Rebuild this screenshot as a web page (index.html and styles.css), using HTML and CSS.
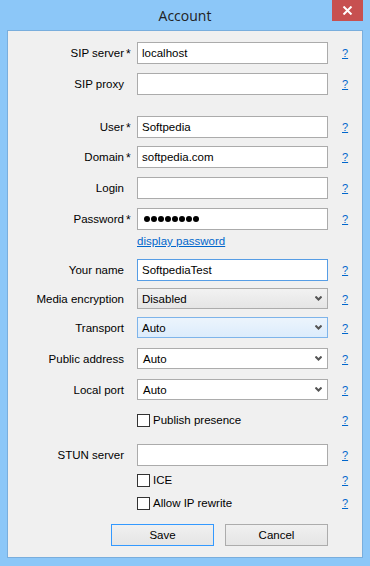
FILE: index.html
```html
<!DOCTYPE html>
<html lang="en">

<head>
    <meta charset="UTF-8">
    <title>Account</title>
    <link rel="stylesheet" href="styles.css">
</head>

<body>
    <div class="window">
        <div class="titlebar">
            <span class="title">Account</span>
            <div class="btn_close">
                <svg width="11" height="9" viewBox="0 0 11 9">
                    <path d="M1.5 0.5 L9.5 8.5 M9.5 0.5 L1.5 8.5" stroke="#fff" stroke-width="2" />
                </svg>
            </div>
        </div>

        <div class="client">
            <div class="form">
                <div class="row r_first">
                    <label class="lbl">SIP server</label><span class="req">*</span>
                    <div class="field">localhost</div>
                    <a class="help" href="#">?</a>
                </div>
                <div class="row r_9">
                    <label class="lbl">SIP proxy</label><span class="req"></span>
                    <div class="field"></div>
                    <a class="help" href="#">?</a>
                </div>
                <div class="row r_21">
                    <label class="lbl">User</label><span class="req">*</span>
                    <div class="field">Softpedia</div>
                    <a class="help" href="#">?</a>
                </div>
                <div class="row r_8">
                    <label class="lbl">Domain</label><span class="req">*</span>
                    <div class="field">softpedia.com</div>
                    <a class="help" href="#">?</a>
                </div>
                <div class="row r_9">
                    <label class="lbl">Login</label><span class="req"></span>
                    <div class="field"></div>
                    <a class="help" href="#">?</a>
                </div>
                <div class="row r_9">
                    <label class="lbl">Password</label><span class="req">*</span>
                    <div class="field dots">
                        <i></i><i></i><i></i><i></i><i></i><i></i><i></i><i></i>
                    </div>
                    <a class="help" href="#">?</a>
                </div>
                <div class="row r_link">
                    <span class="lbl"></span><span class="req"></span>
                    <a class="show_pwd" href="#">display password</a>
                </div>
                <div class="row r_11">
                    <label class="lbl">Your name</label><span class="req"></span>
                    <div class="field focused">SoftpediaTest</div>
                    <a class="help" href="#">?</a>
                </div>
                <div class="row r_7 r_sel">
                    <label class="lbl">Media encryption</label><span class="req"></span>
                    <div class="select grey">
                        <span>Disabled</span>
                        <svg class="arrow" width="7" height="5" viewBox="0 0 7 5"><path d="M0.5 0.5 L3.5 3.5 L6.5 0.5" fill="none" stroke="#555" stroke-width="2" /></svg>
                    </div>
                    <a class="help" href="#">?</a>
                </div>
                <div class="row r_8 r_sel">
                    <label class="lbl">Transport</label><span class="req"></span>
                    <div class="select hot">
                        <span>Auto</span>
                        <svg class="arrow" width="7" height="5" viewBox="0 0 7 5"><path d="M0.5 0.5 L3.5 3.5 L6.5 0.5" fill="none" stroke="#555" stroke-width="2" /></svg>
                    </div>
                    <a class="help" href="#">?</a>
                </div>
                <div class="row r_10 r_sel">
                    <label class="lbl">Public address</label><span class="req"></span>
                    <div class="select white">
                        <span>Auto</span>
                        <svg class="arrow" width="7" height="5" viewBox="0 0 7 5"><path d="M0.5 0.5 L3.5 3.5 L6.5 0.5" fill="none" stroke="#555" stroke-width="2" /></svg>
                    </div>
                    <a class="help" href="#">?</a>
                </div>
                <div class="row r_10 r_sel">
                    <label class="lbl">Local port</label><span class="req"></span>
                    <div class="select white">
                        <span>Auto</span>
                        <svg class="arrow" width="7" height="5" viewBox="0 0 7 5"><path d="M0.5 0.5 L3.5 3.5 L6.5 0.5" fill="none" stroke="#555" stroke-width="2" /></svg>
                    </div>
                    <a class="help" href="#">?</a>
                </div>
                <div class="row r_14 r_chk">
                    <span class="lbl"></span><span class="req"></span>
                    <div class="check"><span class="box"></span>Publish presence</div>
                    <a class="help" href="#">?</a>
                </div>
                <div class="row r_17">
                    <label class="lbl">STUN server</label><span class="req"></span>
                    <div class="field"></div>
                    <a class="help" href="#">?</a>
                </div>
                <div class="row r_8 r_chk">
                    <span class="lbl"></span><span class="req"></span>
                    <div class="check"><span class="box"></span>ICE</div>
                    <a class="help" href="#">?</a>
                </div>
                <div class="row r_10 r_chk">
                    <span class="lbl"></span><span class="req"></span>
                    <div class="check"><span class="box"></span>Allow IP rewrite</div>
                    <a class="help" href="#">?</a>
                </div>

                <div class="buttons">
                    <div class="btn btn_default">Save</div>
                    <div class="btn">Cancel</div>
                </div>
            </div>
        </div>
    </div>
</body>

</html>
```

FILE: styles.css
```css
body {
    margin: 0;
    background: #8cc7f8;
    font-family: "Liberation Sans", Arial, sans-serif;
    font-size: 11.5px;
    color: #000;
}

.window {
    width: 370px;
    height: 566px;
    position: relative;
    background: #8cc7f8;
}

.titlebar {
    height: 30px;
    text-align: center;
}

.title {
    display: inline-block;
    padding-top: 6px;
    font-family: "Open Sans", sans-serif;
    font-size: 14px;
    color: #222;
}

.btn_close {
    position: absolute;
    top: 0;
    right: 7px;
    width: 31px;
    height: 21px;
    background: #c75050;
    display: flex;
    align-items: center;
    justify-content: center;
}

.client {
    margin: 0 7px;
    height: 526px;
    border: 1px solid #79aedd;
    background: #f0f0f0;
}

.form {
    padding-top: 11px;
}

.row {
    display: grid;
    grid-template-columns: 116px 13px 191px 14px 10px;
    align-items: center;
    height: 22px;
}

.r_sel {
    height: 21px;
}

.r_chk {
    height: 13px;
    line-height: 13px;
}

.r_link {
    height: 14px;
    margin-top: 4px;
}

.r_7 { margin-top: 7px; }
.r_8 { margin-top: 8px; }
.r_9 { margin-top: 9px; }
.r_10 { margin-top: 10px; }
.r_11 { margin-top: 11px; }
.r_14 { margin-top: 14px; }
.r_17 { margin-top: 17px; }
.r_21 { margin-top: 21px; }

.lbl {
    text-align: right;
    white-space: nowrap;
}

.req {
    padding-left: 2px;
    align-self: start;
    padding-top: 5px;
    font-size: 12px;
}

.field {
    grid-column: 3;
    height: 20px;
    border: 1px solid #ababab;
    background: #fff;
    padding-left: 4px;
    line-height: 20px;
    width: 185px;
}

.field.focused {
    border-color: #569de5;
}

.dots {
    display: flex;
    align-items: center;
    gap: 1px;
    padding-left: 6px;
    width: 183px;
}

.dots i {
    width: 6px;
    height: 6px;
    border-radius: 50%;
    background: #000;
}

.help {
    grid-column: 5;
    color: #0066cc;
    font-size: 11px;
}

.show_pwd {
    grid-column: 3;
    color: #0066cc;
}

.select {
    grid-column: 3;
    height: 19px;
    border: 1px solid #acacac;
    display: flex;
    align-items: center;
    justify-content: space-between;
    padding: 0 5px 0 4px;
}

.select.grey {
    background: linear-gradient(#f2f2f2, #e5e5e5);
}

.select.hot {
    background: linear-gradient(#ecf4fc, #dcecfc);
    border-color: #7eb4ea;
}

.select.white {
    background: #fff;
    padding-left: 5px;
}

.check {
    grid-column: 3;
    display: flex;
    align-items: center;
    gap: 3px;
}

.box {
    width: 11px;
    height: 11px;
    border: 1px solid #333;
    background: #fff;
}

.buttons {
    display: flex;
    gap: 11px;
    margin-top: 14px;
    padding-left: 103px;
}

.btn {
    width: 101px;
    height: 20px;
    border: 1px solid #acacac;
    background: linear-gradient(#f0f0f0, #e5e5e5);
    text-align: center;
    line-height: 20px;
}

.btn_default {
    border-color: #3399ff;
}
```
